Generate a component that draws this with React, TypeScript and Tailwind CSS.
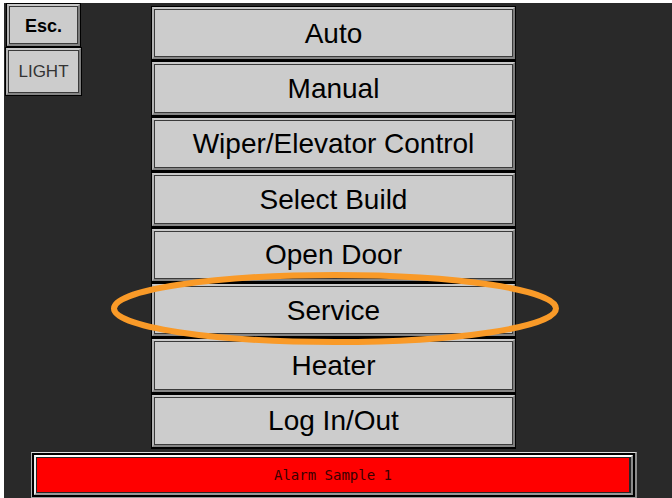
import React from "react";

const menuItems = [
  "Auto",
  "Manual",
  "Wiper/Elevator Control",
  "Select Build",
  "Open Door",
  "Service",
  "Heater",
  "Log In/Out",
];

type BevelButtonProps = {
  className: string;
  children: React.ReactNode;
};

function BevelButton({ className, children }: BevelButtonProps) {
  return (
    <button type="button" className={`flex border border-black bg-black ${className}`}>
      <span className="flex flex-1 self-stretch border-2 border-t-[#c9c9c9] border-r-[#7d7d7d] border-b-[#858585] border-l-[#b4b4b4]">
        <span className="flex flex-1 items-center justify-center border border-[#3a3a3a] bg-[#cccccc] pt-px">
          {children}
        </span>
      </span>
    </button>
  );
}

function Highlight() {
  return (
    <svg
      aria-hidden="true"
      className="pointer-events-none absolute -top-[11px] -left-10 z-10 h-[73px] w-[calc(100%+83px)]"
      viewBox="0 0 448 73"
      preserveAspectRatio="none"
    >
      <ellipse cx="224" cy="36.5" rx="221" ry="33.5" fill="none" stroke="#f99a28" strokeWidth="6" />
    </svg>
  );
}

export default function App() {
  return (
    <div className="flex min-h-screen bg-white pt-[3px] pl-1 font-['Liberation_Sans',Arial,sans-serif]">
      <main className="flex flex-1 flex-col bg-[#292929]">
        <div className="grid flex-1 grid-cols-[147px_minmax(0,1fr)_156px]">
          <div className="flex w-[79px] flex-col items-center">
            <BevelButton className="h-11 w-[75px] text-lg font-bold text-black">Esc.</BevelButton>
            <BevelButton className="h-[49px] w-[77px] text-[17px] text-[#333333]">LIGHT</BevelButton>
          </div>
          <nav aria-label="Main menu" className="flex flex-col pt-[3px]">
            {menuItems.map((item) => (
              <div key={item} className="relative flex flex-1">
                <BevelButton className="flex-1 border-b-2 text-[28px] leading-8 text-black">{item}</BevelButton>
                {item === "Service" && <Highlight />}
              </div>
            ))}
          </nav>
        </div>
        <div
          role="alert"
          className="mt-[3px] mr-[35px] ml-[27px] border border-r-2 border-t-[#dedede] border-r-[#8c8c8c] border-b-[#999999] border-l-[#b4b4b4]"
        >
          <div className="border-2 border-black">
            <div className="border-2 border-t-white border-r-[#8c8c8c] border-b-[#999999] border-l-[#eeeeee]">
              <p className="border border-r-2 border-[#262626] bg-[#ff0000] py-1 text-center font-['DejaVu_Sans_Mono',monospace] text-sm leading-[26px] text-[#3a0000]">
                Alarm Sample 1
              </p>
            </div>
          </div>
        </div>
      </main>
    </div>
  );
}
